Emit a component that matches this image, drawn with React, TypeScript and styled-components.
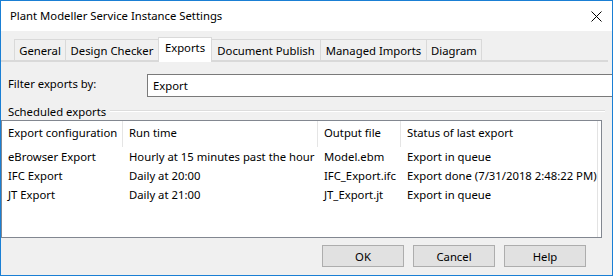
import React from "react";
import styled, { createGlobalStyle } from "styled-components";

const GlobalStyle = createGlobalStyle`
  html, body {
    margin: 0;
    padding: 0;
    background: #ffffff;
  }
  body {
    font-family: "Segoe UI", "Noto Sans", sans-serif;
    font-size: 11.3px;
    color: #000;
  }
`;

const Window = styled.div`
  width: 613px;
  height: 276px;
  box-sizing: border-box;
  border: 1px solid #1a7fd4;
  background: #f0f0f0;
  display: flex;
  flex-direction: column;
  overflow: hidden;
`;

const TitleBar = styled.div`
  height: 30px;
  flex: none;
  background: #ffffff;
  display: flex;
  align-items: center;
  justify-content: space-between;
  padding: 0 10px 0 9px;
`;

const Title = styled.span`
  line-height: 16px;
`;

const TabStrip = styled.div`
  margin: 6px 4px 0 0;
  padding-left: 14px;
  height: 23px;
  display: flex;
  align-items: flex-end;
  border-bottom: 2px solid #d9d9d9;
`;

const Tab = styled.div<{ $w: number; $active?: boolean }>`
  width: ${(p) => p.$w}px;
  height: ${(p) => (p.$active ? 25 : 21)}px;
  margin-bottom: ${(p) => (p.$active ? -2 : 0)}px;
  margin-left: -1px;
  box-sizing: border-box;
  border: 1px solid #d9d9d9;
  border-bottom: none;
  background: ${(p) => (p.$active ? "#ffffff" : "#f0f0f0")};
  display: flex;
  align-items: ${(p) => (p.$active ? "flex-start" : "center")};
  padding-top: ${(p) => (p.$active ? 2 : 0)}px;
  justify-content: center;
  white-space: nowrap;
  position: relative;
  z-index: ${(p) => (p.$active ? 1 : 0)};
`;

const FilterRow = styled.div`
  margin-top: 12px;
  display: flex;
  align-items: center;
  padding-left: 7px;
`;

const FilterLabel = styled.span`
  width: 139px;
  flex: none;
  margin-top: -4px;
`;

const FilterInput = styled.div`
  flex: 1;
  height: 23px;
  box-sizing: border-box;
  border: 1px solid #7a7a7a;
  border-right: none;
  margin-right: -4px;
  background: #ffffff;
  display: flex;
  align-items: center;
  padding-left: 5px;
`;

const GroupHeader = styled.div`
  margin-top: 8px;
  height: 12px;
  display: flex;
  align-items: center;
  padding: 0 7px 0 7px;
  gap: 4px;
`;

const GroupLine = styled.div`
  flex: 1;
  height: 1px;
  background: #dcdcdc;
  border-bottom: 1px solid #ffffff;
`;

const ListView = styled.div`
  margin-top: 3px;
  width: 601px;
  height: 118px;
  box-sizing: border-box;
  border: 1px solid #828790;
  background: #ffffff;
  box-shadow: inset -3px 0 0 #ffffff, inset -4px 0 0 #e3e3e3;
  flex: none;
`;

const Grid = styled.div`
  display: grid;
  grid-template-columns: 121px 195px 83px 196px;
`;

const HeadCell = styled.div<{ $last?: boolean }>`
  height: 26px;
  display: flex;
  align-items: center;
  padding: 0 0 3px 6px;
  box-sizing: border-box;
  border-right: ${(p) => (p.$last ? "none" : "1px solid #e5e5e5")};
  white-space: nowrap;
`;

const Cell = styled.div`
  height: 19px;
  display: flex;
  align-items: center;
  padding-left: 6px;
  white-space: nowrap;
  overflow: hidden;
`;

const ButtonRow = styled.div`
  margin-top: 7px;
  display: flex;
  justify-content: flex-end;
  gap: 9px;
  padding-right: 26px;
`;

const Button = styled.button`
  width: 82px;
  height: 22px;
  box-sizing: border-box;
  border: 1px solid #adadad;
  background: #e1e1e1;
  font-family: "Segoe UI", "Noto Sans", sans-serif;
  font-size: 11.3px;
  color: #000;
  padding: 0;
`;

const tabs = [
  { label: "General", w: 52 },
  { label: "Design Checker", w: 94 },
  { label: "Exports", w: 54, active: true },
  { label: "Document Publish", w: 110 },
  { label: "Managed Imports", w: 107 },
  { label: "Diagram", w: 56 },
];

const rows = [
  ["eBrowser Export", "Hourly at 15 minutes past the hour", "Model.ebm", "Export in queue"],
  ["IFC Export", "Daily at 20:00", "IFC_Export.ifc", "Export done (7/31/2018 2:48:22 PM)"],
  ["JT Export", "Daily at 21:00", "JT_Export.jt", "Export in queue"],
];

const headers = ["Export configuration", "Run time", "Output file", "Status of last export"];

export default function App() {
  return (
    <>
      <GlobalStyle />
      <Window>
        <TitleBar>
          <Title>Plant Modeller Service Instance Settings</Title>
          <svg width="11" height="11" viewBox="0 0 11 11">
            <path d="M0.5 0.5L10.5 10.5M10.5 0.5L0.5 10.5" stroke="#000" strokeWidth="1" />
          </svg>
        </TitleBar>
        <TabStrip>
          {tabs.map((t) => (
            <Tab key={t.label} $w={t.w} $active={t.active}>
              {t.label}
            </Tab>
          ))}
        </TabStrip>
        <FilterRow>
          <FilterLabel>Filter exports by:</FilterLabel>
          <FilterInput>Export</FilterInput>
        </FilterRow>
        <GroupHeader>
          <span>Scheduled exports</span>
          <GroupLine />
        </GroupHeader>
        <ListView>
          <Grid>
            {headers.map((h, i) => (
              <HeadCell key={h} $last={i === headers.length - 1}>
                {h}
              </HeadCell>
            ))}
            {rows.map((r) => r.map((c, i) => <Cell key={r[0] + i}>{c}</Cell>))}
          </Grid>
        </ListView>
        <ButtonRow>
          <Button>OK</Button>
          <Button>Cancel</Button>
          <Button>Help</Button>
        </ButtonRow>
      </Window>
    </>
  );
}
